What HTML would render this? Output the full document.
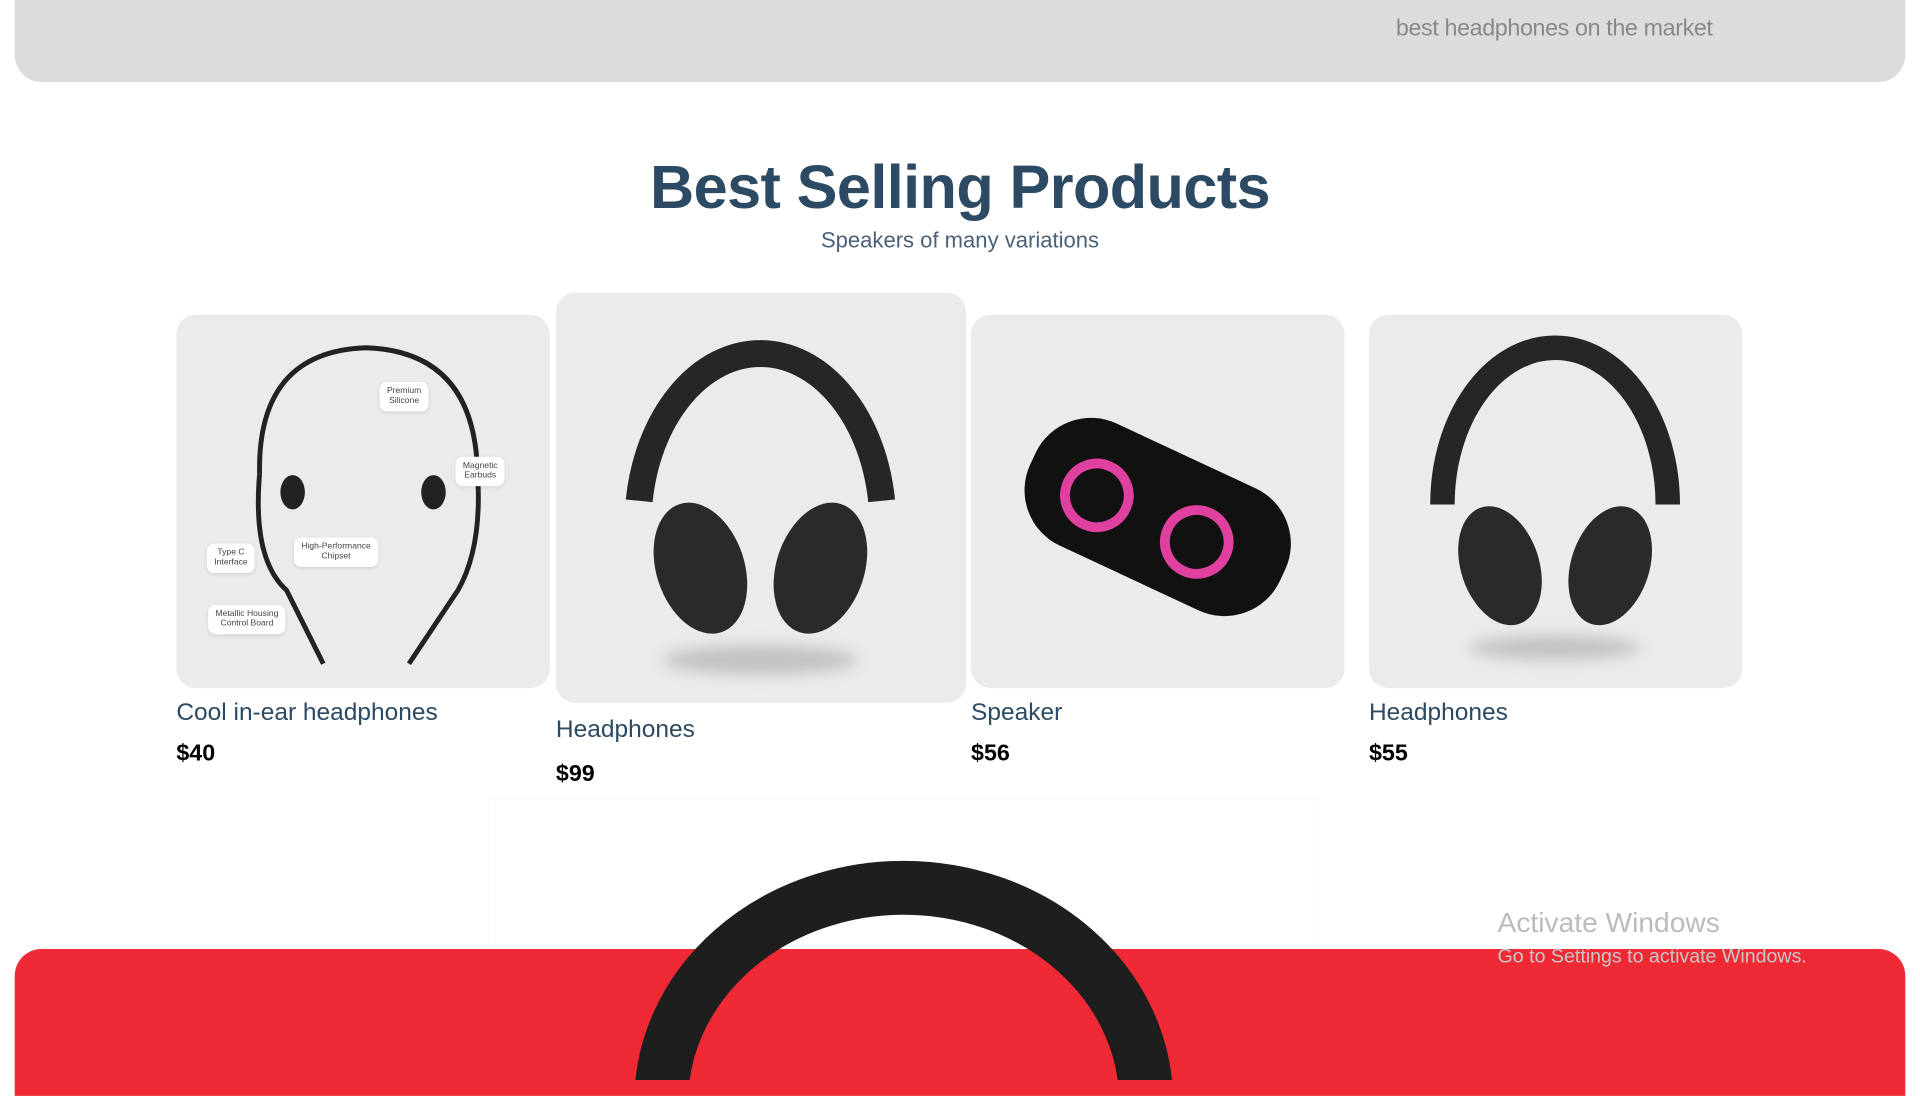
<!DOCTYPE html>
<html><head><meta charset="utf-8"><style>
html,body{margin:0;padding:0;width:1920px;height:1080px;overflow:hidden;background:#fff;font-family:"Liberation Sans",sans-serif}
#w{position:absolute;left:0;top:0;width:1568px;height:882px;transform:scale(1.22449);transform-origin:0 0}
.a{position:absolute}
.card{position:absolute;background:#ebebeb;border-radius:16px;overflow:hidden}
.name{position:absolute;font-size:20px;color:#2c4a63}
.price{position:absolute;font-size:19px;font-weight:bold;color:#000}
.lbl{position:absolute;background:#fff;border-radius:6px;font-size:7px;color:#444;text-align:center;line-height:8px;padding:4px 6px;box-shadow:0 1px 3px rgba(0,0,0,.1)}
</style></head><body><div id="w">
<div class="a" style="left:12px;top:0;width:1544px;height:67px;background:#dcdcdc;border-radius:0 0 22px 22px"></div>
<div class="a" style="left:1140px;top:13px;font-size:19px;color:#888;letter-spacing:-0.3px">best headphones on the market</div>
<div class="a" style="left:0;width:1568px;top:124px;text-align:center;font-size:50px;font-weight:bold;color:#2c4a63;letter-spacing:-0.5px">Best Selling Products</div>
<div class="a" style="left:0;width:1568px;top:186px;text-align:center;font-size:18px;color:#4a6178">Speakers of many variations</div>

<div class="card" style="left:144px;top:257px;width:305px;height:305px">
<svg width="305" height="305"><g fill="none" stroke="#222" stroke-width="4"><path d="M68 130 Q66 30 155 27 Q244 30 246 130"/><path d="M68 130 Q62 200 90 225 L120 285"/><path d="M246 130 Q250 190 230 225 L190 285"/></g>
<g fill="#222"><ellipse cx="95" cy="145" rx="10" ry="14"/><ellipse cx="210" cy="145" rx="10" ry="14"/></g></svg>
<div class="lbl" style="left:166px;top:55px">Premium<br>Silicone</div>
<div class="lbl" style="left:228px;top:116px">Magnetic<br>Earbuds</div>
<div class="lbl" style="left:25px;top:187px">Type C<br>Interface</div>
<div class="lbl" style="left:96px;top:182px">High-Performance<br>Chipset</div>
<div class="lbl" style="left:26px;top:237px">Metallic Housing<br>Control Board</div>
</div>
<div class="name" style="left:144px;top:571px">Cool in-ear headphones</div>
<div class="price" style="left:144px;top:605px">$40</div>

<div class="card" style="left:454px;top:239px;width:335px;height:335px">
<svg width="335" height="335"><ellipse cx="167" cy="300" rx="80" ry="12" fill="#999" opacity=".5" filter="blur(6px)"/>
<path d="M68 170 A100 140 0 0 1 266 170" fill="none" stroke="#262626" stroke-width="22"/>
<ellipse cx="118" cy="225" rx="36" ry="55" transform="rotate(-18 118 225)" fill="#2a2a2a"/>
<ellipse cx="216" cy="225" rx="36" ry="55" transform="rotate(18 216 225)" fill="#2a2a2a"/></svg></div>
<div class="name" style="left:454px;top:585px">Headphones</div>
<div class="price" style="left:454px;top:622px">$99</div>

<div class="card" style="left:793px;top:257px;width:305px;height:305px">
<svg width="305" height="305"><g transform="rotate(25 152 165)"><rect x="40" y="110" width="225" height="110" rx="50" fill="#111"/>
<circle cx="100" cy="170" r="26" fill="none" stroke="#e040a0" stroke-width="8"/><circle cx="190" cy="170" r="26" fill="none" stroke="#e040a0" stroke-width="8"/></g></svg></div>
<div class="name" style="left:793px;top:571px">Speaker</div>
<div class="price" style="left:793px;top:605px">$56</div>

<div class="card" style="left:1118px;top:257px;width:305px;height:305px">
<svg width="305" height="305"><ellipse cx="152" cy="272" rx="70" ry="10" fill="#999" opacity=".5" filter="blur(6px)"/>
<path d="M60 155 A92 128 0 0 1 244 155" fill="none" stroke="#262626" stroke-width="20"/>
<ellipse cx="107" cy="205" rx="32" ry="50" transform="rotate(-18 107 205)" fill="#2a2a2a"/>
<ellipse cx="197" cy="205" rx="32" ry="50" transform="rotate(18 197 205)" fill="#2a2a2a"/></svg></div>
<div class="name" style="left:1118px;top:571px">Headphones</div>
<div class="price" style="left:1118px;top:605px">$55</div>

<div class="a" style="left:399px;top:652px;width:677px;height:140px;border:1px solid #fafafa;border-bottom:none"></div>
<div class="a" style="left:12px;top:775px;width:1544px;height:120px;background:#f02a35;border-radius:22px 22px 0 0"></div>
<svg class="a" style="left:500px;top:700px" width="480" height="182"><path d="M40 200 A198 175 0 0 1 436 200" fill="none" stroke="#1e1e1e" stroke-width="44"/></svg>
<div class="a" style="left:1223px;top:740px;font-size:23px;color:#bbb">Activate Windows</div>
<div class="a" style="left:1223px;top:773px;font-size:16px;color:#c8c8c8">Go to Settings to activate Windows.</div>
</div></body></html>
